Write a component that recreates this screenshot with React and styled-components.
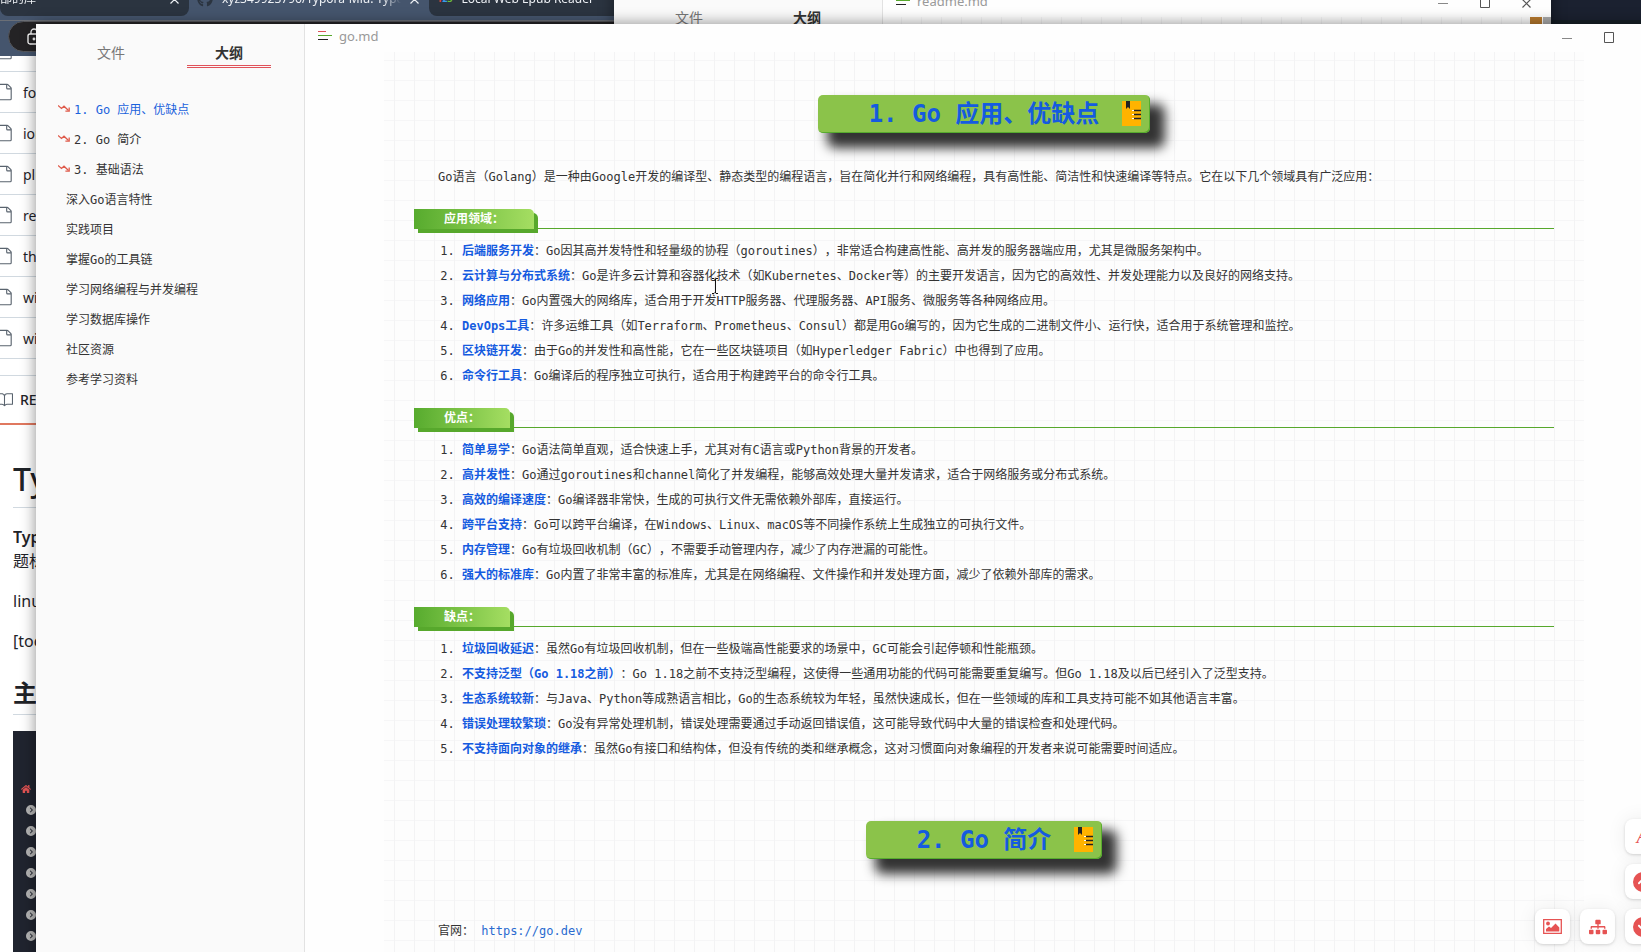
import React from "react";
import styled, { createGlobalStyle } from "styled-components";
import { FaGithub, FaHome, FaSitemap } from "react-icons/fa";
import { FaCircleChevronUp, FaCircleChevronDown, FaCircleChevronRight } from "react-icons/fa6";
import { GoFile, GoBook } from "react-icons/go";

const cjk = '"Noto Sans CJK SC"';
const mono = `"DejaVu Sans Mono", ${cjk}, monospace`;
const sans = `"Noto Sans", ${cjk}, sans-serif`;

const GlobalStyle = createGlobalStyle`
  *, *::before, *::after { box-sizing: border-box; }
  body { margin: 0; overflow: hidden; background: #fff; }
  button { border: 0; padding: 0; background: none; font: inherit; color: inherit; cursor: pointer; }
  h1, h2, p, ol, ul { margin: 0; padding: 0; }
  a { text-decoration: none; }
  svg { display: block; flex: none; }
`;

const Desktop = styled.div`
  position: relative;
  height: 100vh;
  overflow: hidden;
`;

/* ---------- browser behind ---------- */
const Browser = styled.div`
  height: 100%;
  background: #fff;
  font-family: ${sans};
  color: #1f2328;
`;
const TabStrip = styled.div`
  display: flex;
  height: 20px;
  background: #45556d;
  color: #eef1f5;
  font-size: 12px;
`;
const BrowserTab = styled.div`
  display: flex;
  align-items: center;
  gap: 9px;
  width: ${(p) => p.$width}px;
  height: 32px;
  margin-top: -16px;
  padding: 0 10px 2px ${(p) => (p.$first ? 0 : 8)}px;
  line-height: 28px;
  white-space: nowrap;
  border-radius: 0 0 8px 8px;
  background: ${(p) => (p.$active ? "transparent" : "#2b3440")};
`;
const TabLabel = styled.span`
  flex: 1;
  overflow: hidden;
  mask-image: linear-gradient(90deg, #000 90%, transparent);
`;
const Digit = styled.b`
  color: ${(p) => p.$color};
`;
const DigitLogo = styled.span`
  display: flex;
  font-size: 9px;
`;
const Toolbar = styled.div`
  height: 36px;
  padding: 0 8px;
  border-top: 1px solid #6b6f76;
  background: #45556d;
`;
const AddressBar = styled.div`
  display: flex;
  align-items: center;
  height: 31px;
  padding-left: 18px;
  border: 1px solid #55565a;
  border-radius: 16px;
  background: #242325;
  color: #fff;
`;
const FileList = styled.ul`
  height: 303px;
  overflow: hidden;
  list-style: none;
  border-bottom: 1px solid #d1d9e0;
`;
const FileRow = styled.li`
  display: flex;
  align-items: center;
  gap: 9px;
  height: 41px;
  margin-left: -4px;
  font-size: 14px;
  border-bottom: 1px solid #d1d9e0;
  &:first-child { margin-top: -25px; }
  svg { color: #59636e; }
`;
const ReadmeBar = styled.div`
  display: flex;
  align-items: center;
  gap: 7px;
  height: 50px;
  margin-top: 16px;
  margin-left: -4px;
  border-top: 1px solid #d1d9e0;
  border-bottom: 2px solid #e0785f;
  font-size: 14px;
  font-weight: 500;
  svg { color: #59636e; }
`;
const Readme = styled.article`
  padding: 34px 13px 0;
  font-size: 16px;
  line-height: 24px;
  p { margin-bottom: 16px; width: 40px; overflow: hidden; white-space: nowrap; }
`;
const ReadmeTitle = styled.h1`
  height: 49px;
  margin-bottom: 17px;
  border-bottom: 1px solid #d1d9e0;
  font-size: 32px;
  line-height: 40px;
  font-weight: 500;
`;
const ReadmeHeading = styled.h2`
  height: 38px;
  margin: 24px 0 16px;
  border-bottom: 1px solid #d1d9e0;
  font-size: 24px;
  line-height: 32px;
`;
const ReadmeLead = styled.b`
  font-weight: 600;
`;
const Shot = styled.div`
  display: flex;
  flex-direction: column;
  height: 240px;
  padding: 53px 8px 0;
  background: #20242f;
  color: #b5b5b5;
  svg + svg { margin: 0 0 11px 5px; }
  svg:first-child { color: #e25353; margin-bottom: 11px; }
`;

/* ---------- editor windows ---------- */
const Window = styled.section`
  position: absolute;
  top: ${(p) => p.$top}px;
  left: ${(p) => p.$left}px;
  right: ${(p) => p.$right}px;
  height: 100%;
  display: flex;
  background: #fefefe;
  box-shadow: 0 0 14px rgba(0, 0, 0, 0.45);
  font-family: ${mono};
  font-size: 12px;
  color: #333;
`;
const Sidebar = styled.aside`
  flex: none;
  width: 269px;
  border-right: 1px solid #e2e2e2;
  background: #fafafa;
`;
const Tabs = styled.div`
  display: flex;
  justify-content: center;
  gap: 34px;
  padding-top: 14px;
`;
const Tab = styled.button`
  width: 84px;
  height: 30px;
  padding-top: 3px;
  font-size: 14px;
  line-height: 24px;
  color: ${(p) => (p.$active ? "#333" : "#777")};
  font-weight: ${(p) => (p.$active ? 700 : 400)};
  border-bottom: ${(p) => (p.$active ? "3px double #e0525a" : "3px solid transparent")};
`;
const Outline = styled.nav`
  display: flex;
  flex-direction: column;
  padding: 25px 20px 0 22px;
`;
const OutlineLink = styled.a`
  display: flex;
  align-items: center;
  gap: 4px;
  height: 30px;
  padding-left: ${(p) => (p.$plain ? 8 : 0)}px;
  color: ${(p) => (p.$active ? "#1a62dc" : "#333")};
`;
const Main = styled.main`
  display: flex;
  flex-direction: column;
  flex: 1;
  min-width: 0;
`;
const TitleBar = styled.header`
  display: flex;
  align-items: center;
  flex: none;
  height: 28px;
  padding: 0 14px 5px 13px;
  gap: 7px;
  font: 13px/20px ${sans};
  color: #999;
`;
const FileName = styled.span`
  flex: 1;
`;
const Controls = styled.div`
  display: flex;
  gap: 31px;
  padding: 5px ${(p) => p.$end}px 0 0;
  color: #555;
`;
const Paper = styled.article`
  flex: 1;
  width: 100%;
  max-width: 1200px;
  margin: 0 auto;
  padding: 43px 30px 0;
  background-color: #fdfdfd;
  background-image:
    linear-gradient(90deg, #f3f3f4 1px, transparent 1px),
    linear-gradient(#f6f6f7 1px, transparent 1px);
  background-size: 20px 20px;
  background-position: 10px 8px;
`;
const Chapter = styled.h1`
  display: flex;
  align-items: center;
  position: relative;
  width: fit-content;
  height: 38px;
  margin: ${(p) => (p.$later ? "59px" : "0")} auto 0;
  padding: 0 51px;
  border-radius: 5px;
  background: #8bc34a;
  box-shadow: inset -1px -1px 0 #57ab2e, 12px 12px 12px 3px #333;
  color: #155be0;
  font-size: 24px;
  line-height: 36px;
  white-space: pre;
`;
const ChapterIcon = styled.span`
  position: absolute;
  top: 6px;
  right: 9px;
`;
const Paragraph = styled.p`
  margin-top: ${(p) => p.$gap}px;
  padding-left: 24px;
  line-height: 25px;
  text-spacing-trim: space-all;
`;
const SectionHead = styled.div`
  display: flex;
  margin-top: 19px;
  border-bottom: 1px solid #57a82c;
  height: 20px;
`;
const SectionTitle = styled.h2`
  height: 20px;
  padding: 0 30px;
  border-radius: 0 5px 0 0;
  background: linear-gradient(90deg, #57ab2e, #a5de62);
  box-shadow: 4px 4px 0 #57a82c;
  color: #fff;
  font-size: 12px;
  line-height: 21px;
`;
const Points = styled.ol`
  padding: 10px 0 0 48px;
  line-height: 25px;
  text-spacing-trim: space-all;
  strong { color: #155be0; }
`;
const Link = styled.a`
  color: #2a6bd0;
`;
const FloatTools = styled.div`
  position: absolute;
  right: 3px;
  bottom: 32px;
  display: grid;
  grid-template-columns: repeat(3, 35px);
  gap: 10px;
`;
const FloatButton = styled.button`
  display: grid;
  place-items: center;
  grid-column: ${(p) => p.$col};
  height: 35px;
  border-radius: 8px;
  background: #fff;
  box-shadow: 0 1px 3px rgba(0, 0, 0, 0.15), 0 0 20px rgba(0, 0, 0, 0.07);
  color: #e65353;
  font: italic 20px "Liberation Serif", serif;
`;
const Caret = styled.svg`
  position: absolute;
  left: 711px;
  top: 278px;
`;
const BackPanel = styled.div`
  position: absolute;
  top: 0;
  right: 0;
  width: 90px;
  height: 24px;
  border-bottom: 4px solid #172027;
  background: #1b2130;
`;
const BackPaper = styled(Paper)`
  max-width: none;
  background-position: 18px 8px;
`;
const Swatches = styled.div`
  display: flex;
  justify-content: flex-end;
  gap: 1px;
  margin: -43px -30px 0;
`;
const Swatch = styled.span`
  width: ${(p) => p.$width}px;
  height: 20px;
  background: ${(p) => p.$color};
`;

const MenuIcon = () => (
  <svg width="14" height="10" viewBox="0 0 14 10">
    <path d="M0 .5h8" stroke="#e0525a" />
    <path d="M0 4.5h14" stroke="#57a82c" />
    <path d="M0 8.5h10" stroke="#222" />
  </svg>
);
const ZigzagIcon = () => (
  <svg width="12" height="9" viewBox="0 0 12 9" fill="none" stroke="#df5b4b" strokeWidth="1.3">
    <path d="M0 1.5l3.5 3L6 2.2l4.5 4.3" />
    <path d="M11.2 3.5v3.7H7.4" />
  </svg>
);
const BookIcon = () => (
  <svg width="19" height="25" viewBox="0 0 19 25">
    <path d="M0 0h19v25H0z" fill="#ffb300" />
    <path d="M4 0h4v8L6 6 4 8z" fill="#222" />
    <path d="M10 9.5h2M10 13.5h2M10 17.5h2" stroke="#fff" />
    <path d="M12 9.5h7M12 13.5h7M12 17.5h7" stroke="#222" strokeWidth="1.4" />
  </svg>
);
const PictureIcon = () => (
  <svg width="19" height="15" viewBox="0 0 19 15">
    <path d="M.7.7h17.6v13.6H.7z" fill="none" stroke="currentColor" strokeWidth="1.3" />
    <circle cx="5" cy="4.5" r="1.9" fill="currentColor" />
    <path d="M3 12.5v-2.5l3-2.5 2 1.5 4.5-4.5 3.8 4v4z" fill="currentColor" />
  </svg>
);
const LockIcon = () => (
  <svg width="14" height="17" viewBox="0 0 14 17" fill="none" stroke="#fff" strokeWidth="1.3">
    <rect x="1" y="6" width="12" height="10" rx="2" />
    <path d="M4 6V4a3 3 0 0 1 6 0v2" />
    <circle cx="7" cy="11" r=".8" fill="#fff" />
  </svg>
);
const CrossIcon = () => (
  <svg width="9" height="9" viewBox="0 0 9 9" stroke="currentColor" strokeWidth="1.2">
    <path d="M.5.5l8 8M8.5.5l-8 8" />
  </svg>
);
const WindowControls = ({ closable, end }) => (
  <Controls $end={end}>
    <button aria-label="Minimize">
      <svg width="11" height="12" viewBox="0 0 11 12"><path d="M0 6.5h10" stroke="#888" /></svg>
    </button>
    <button aria-label="Maximize">
      <svg width="11" height="12" viewBox="0 0 11 12"><path d="M.5.5h9v10h-9z" fill="none" stroke="#555" /></svg>
    </button>
    {closable && <button aria-label="Close"><CrossIcon /></button>}
  </Controls>
);

const files = ["", "fo", "ion", "plu", "re", "th", "wi", "wi"];
const outline = ["1. Go 应用、优缺点", "2. Go 简介", "3. 基础语法", "深入Go语言特性", "实践项目", "掌握Go的工具链", "学习网络编程与并发编程", "学习数据库操作", "社区资源", "参考学习资料"];
const sections = [
  ["应用领域：", [
    ["后端服务开发", "Go因其高并发特性和轻量级的协程（goroutines），非常适合构建高性能、高并发的服务器端应用，尤其是微服务架构中。"],
    ["云计算与分布式系统", "Go是许多云计算和容器化技术（如Kubernetes、Docker等）的主要开发语言，因为它的高效性、并发处理能力以及良好的网络支持。"],
    ["网络应用", "Go内置强大的网络库，适合用于开发HTTP服务器、代理服务器、API服务、微服务等各种网络应用。"],
    ["DevOps工具", "许多运维工具（如Terraform、Prometheus、Consul）都是用Go编写的，因为它生成的二进制文件小、运行快，适合用于系统管理和监控。"],
    ["区块链开发", "由于Go的并发性和高性能，它在一些区块链项目（如Hyperledger Fabric）中也得到了应用。"],
    ["命令行工具", "Go编译后的程序独立可执行，适合用于构建跨平台的命令行工具。"],
  ]],
  ["优点：", [
    ["简单易学", "Go语法简单直观，适合快速上手，尤其对有C语言或Python背景的开发者。"],
    ["高并发性", "Go通过goroutines和channel简化了并发编程，能够高效处理大量并发请求，适合于网络服务或分布式系统。"],
    ["高效的编译速度", "Go编译器非常快，生成的可执行文件无需依赖外部库，直接运行。"],
    ["跨平台支持", "Go可以跨平台编译，在Windows、Linux、macOS等不同操作系统上生成独立的可执行文件。"],
    ["内存管理", "Go有垃圾回收机制（GC），不需要手动管理内存，减少了内存泄漏的可能性。"],
    ["强大的标准库", "Go内置了非常丰富的标准库，尤其是在网络编程、文件操作和并发处理方面，减少了依赖外部库的需求。"],
  ]],
  ["缺点：", [
    ["垃圾回收延迟", "虽然Go有垃圾回收机制，但在一些极端高性能要求的场景中，GC可能会引起停顿和性能瓶颈。"],
    ["不支持泛型（Go 1.18之前）", "Go 1.18之前不支持泛型编程，这使得一些通用功能的代码可能需要重复编写。但Go 1.18及以后已经引入了泛型支持。"],
    ["生态系统较新", "与Java、Python等成熟语言相比，Go的生态系统较为年轻，虽然快速成长，但在一些领域的库和工具支持可能不如其他语言丰富。"],
    ["错误处理较繁琐", "Go没有异常处理机制，错误处理需要通过手动返回错误值，这可能导致代码中大量的错误检查和处理代码。"],
    ["不支持面向对象的继承", "虽然Go有接口和结构体，但没有传统的类和继承概念，这对习惯面向对象编程的开发者来说可能需要时间适应。"],
  ]],
];

const SideTabs = () => (
  <Tabs>
    <Tab>文件</Tab>
    <Tab $active>大纲</Tab>
  </Tabs>
);

export default function App() {
  return (
    <Desktop>
      <GlobalStyle />
      <Browser>
        <TabStrip>
          <BrowserTab $width={189} $first><TabLabel>部的库</TabLabel><CrossIcon /></BrowserTab>
          <BrowserTab $width={240} $active>
            <FaGithub size={16} color="#2b3440" />
            <TabLabel>xyz349923796/Typora-Miu: Typora</TabLabel>
            <CrossIcon />
          </BrowserTab>
          <BrowserTab $width={240}>
            <DigitLogo><Digit $color="#e8453c">1</Digit><Digit $color="#3b9be8">2</Digit><Digit $color="#6cbf3a">3</Digit></DigitLogo>
            <TabLabel>Local Web Epub Reader</TabLabel>
          </BrowserTab>
        </TabStrip>
        <Toolbar><AddressBar><LockIcon /></AddressBar></Toolbar>
        <FileList>
          {files.map((name, i) => (
            <FileRow key={i}><GoFile size={18} />{name}</FileRow>
          ))}
        </FileList>
        <ReadmeBar><GoBook size={17} />RE</ReadmeBar>
        <Readme>
          <ReadmeTitle>Ty</ReadmeTitle>
          <p><ReadmeLead>Typ</ReadmeLead><br />题标</p>
          <p>linu</p>
          <p>[toc</p>
          <ReadmeHeading>主</ReadmeHeading>
          <Shot>
            <FaHome size={10} />
            {Array.from({ length: 8 }, (_, i) => <FaCircleChevronRight key={i} size={10} />)}
          </Shot>
        </Readme>
      </Browser>
      <BackPanel />

      <Window $top={-11} $left={614} $right={90}>
        <Sidebar><SideTabs /></Sidebar>
        <Main>
          <TitleBar><MenuIcon /><FileName>readme.md</FileName><WindowControls closable end={6} /></TitleBar>
          <BackPaper>
            <Swatches><Swatch $width={12} $color="#b87a2e" /><Swatch $width={8} $color="#aaa" /></Swatches>
          </BackPaper>
        </Main>
      </Window>

      <Window $top={24} $left={36} $right={-22}>
        <Sidebar>
          <SideTabs />
          <Outline>
            {outline.map((text, i) => (
              <OutlineLink key={text} href="#" $active={i === 0} $plain={i > 2}>
                {i < 3 && <ZigzagIcon />}{text}
              </OutlineLink>
            ))}
          </Outline>
        </Sidebar>
        <Main>
          <TitleBar><MenuIcon /><FileName>go.md</FileName><WindowControls end={34} /></TitleBar>
          <Paper>
            <Chapter>1. Go 应用、优缺点<ChapterIcon><BookIcon /></ChapterIcon></Chapter>
            <Paragraph $gap={32}>Go语言（Golang）是一种由Google开发的编译型、静态类型的编程语言，旨在简化并行和网络编程，具有高性能、简洁性和快速编译等特点。它在以下几个领域具有广泛应用：</Paragraph>
            {sections.map(([title, items]) => (
              <React.Fragment key={title}>
                <SectionHead><SectionTitle>{title}</SectionTitle></SectionHead>
                <Points>
                  {items.map(([name, text]) => <li key={name}><strong>{name}</strong>：{text}</li>)}
                </Points>
              </React.Fragment>
            ))}
            <Chapter $later>2. Go 简介<ChapterIcon><BookIcon /></ChapterIcon></Chapter>
            <Paragraph $gap={60}>官网： <Link href="https://go.dev">https://go.dev</Link></Paragraph>
          </Paper>
        </Main>
        <FloatTools>
          <FloatButton $col={3} aria-label="Font">A</FloatButton>
          <FloatButton $col={3} aria-label="Scroll up"><FaCircleChevronUp size={20} /></FloatButton>
          <FloatButton $col={1} aria-label="Image"><PictureIcon /></FloatButton>
          <FloatButton $col={2} aria-label="Outline"><FaSitemap size={18} /></FloatButton>
          <FloatButton $col={3} aria-label="Scroll down"><FaCircleChevronDown size={20} /></FloatButton>
        </FloatTools>
      </Window>
      <Caret width="8" height="16" viewBox="0 0 8 16" fill="none" stroke="#111">
        <path d="M1 .5h2l1 1 1-1h2M4.5 1v14M1 15.5h2l1-1 1 1h2" />
      </Caret>
    </Desktop>
  );
}
